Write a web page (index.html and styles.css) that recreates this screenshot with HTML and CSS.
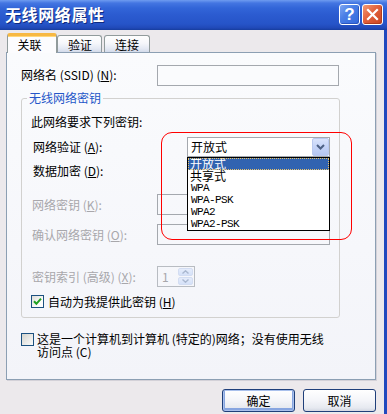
FILE: index.html
```html
<!DOCTYPE html>
<html lang="zh-CN">
<head>
<meta charset="utf-8">
<title>无线网络属性</title>
<link rel="stylesheet" href="styles.css">
</head>
<body>
<div class="window">
  <div class="titlebar">
    <span class="title">无线网络属性</span>
    <div class="caption-buttons">
      <span class="cap-btn help">?</span>
      <span class="cap-btn close"><svg width="13" height="13" viewBox="0 0 13 13"><path d="M2 2 L11 11 M11 2 L2 11" stroke="#fff" stroke-width="2.2" stroke-linecap="square"/></svg></span>
    </div>
  </div>
  <div class="client">
    <div class="tabs">
      <div class="tab active">关联</div>
      <div class="tab">验证</div>
      <div class="tab">连接</div>
    </div>
    <div class="panel">
      <div class="row ssid-row">
        <span class="lbl lbl-ssid">网络名 (SSID) (<u>N</u>):</span>
        <div class="textbox ssid"></div>
      </div>
      <fieldset class="group">
        <legend>无线网络密钥</legend>
        <div class="line r1">此网络要求下列密钥:</div>
        <div class="row r2">
          <span class="lbl lbl-combo">网络验证 (<u>A</u>):</span>
          <div class="combo">
            <span class="combo-text">开放式</span>
            <span class="drop-btn"><svg width="9" height="6" viewBox="0 0 9 6"><path d="M1 1 L4.5 4.5 L8 1" fill="none" stroke="#4d6185" stroke-width="2"/></svg></span>
            <ul class="listbox">
              <li class="sel">开放式</li>
              <li>共享式</li>
              <li class="latin">WPA</li>
              <li class="latin">WPA-PSK</li>
              <li class="latin">WPA2</li>
              <li class="latin">WPA2-PSK</li>
            </ul>
          </div>
        </div>
        <div class="row r3">
          <span class="lbl lbl-combo">数据加密 (<u>D</u>):</span>
          <div class="combo covered"></div>
        </div>
        <div class="row r4">
          <span class="lbl lbl-key disabled">网络密钥 (<u>K</u>):</span>
          <div class="textbox key"></div>
        </div>
        <div class="row r5">
          <span class="lbl lbl-key disabled">确认网络密钥 (<u>O</u>):</span>
          <div class="textbox key"></div>
        </div>
        <div class="row r6">
          <span class="lbl lbl-key disabled">密钥索引 (高级) (<u>X</u>):</span>
          <div class="spinner">
            <span class="spin-val">1</span>
            <span class="spin-btns">
              <span class="spin-b"><svg width="7" height="4" viewBox="0 0 7 4"><path d="M0.5 3.5 L3.5 0.8 L6.5 3.5" fill="none" stroke="#a9b7cf" stroke-width="1.4"/></svg></span>
              <span class="spin-b"><svg width="7" height="4" viewBox="0 0 7 4"><path d="M0.5 0.5 L3.5 3.2 L6.5 0.5" fill="none" stroke="#a9b7cf" stroke-width="1.4"/></svg></span>
            </span>
          </div>
        </div>
        <div class="row r7">
          <span class="check checked"><svg width="9" height="9" viewBox="0 0 9 9"><path d="M1 4.2 L3.4 6.8 L8 1.6" fill="none" stroke="#21a121" stroke-width="2"/></svg></span>
          <span class="check-lbl">自动为我提供此密钥 (<u>H</u>)</span>
        </div>
      </fieldset>
      <div class="adhoc">
        <span class="check unchecked"></span>
        <span class="adhoc-lbl">这是一个计算机到计算机 (特定的)网络；没有使用无线<br>访问点 (C)</span>
      </div>
    </div>
    <div class="buttons">
      <button class="btn default">确定</button>
      <button class="btn">取消</button>
    </div>
  </div>
  <div class="annotation"></div>
</div>
</body>
</html>
```
FILE: styles.css
```css
* { box-sizing: border-box; }
html, body { margin: 0; padding: 0; }
body {
  width: 387px;
  height: 414px;
  overflow: hidden;
  font-family: "Noto Sans CJK SC", "Noto Sans", sans-serif;
  font-size: 12px;
  line-height: 12px;
  color: #000;
  background: #ece9ec;
}
u { text-decoration: underline; text-underline-offset: 1px; }

.window {
  position: relative;
  width: 387px;
  height: 414px;
}

/* title bar */
.titlebar {
  height: 30px;
  display: flex;
  align-items: center;
  justify-content: space-between;
  padding: 0 4px 0 5px;
  background: linear-gradient(to bottom, #6f9cf0 0px, #4476e2 3px, #3265d8 8px, #2b5bd0 50%, #2654c8 80%, #2049b8 93%, #173d9e 100%);
}
.title {
  color: #fff;
  font-weight: bold;
  font-size: 16px;
  line-height: 16px;
  letter-spacing: 0.6px;
  text-shadow: 1px 1px 0 #0f2a80;
  margin-top: -2px;
}
.caption-buttons {
  display: flex;
  gap: 2px;
  margin-top: -1px;
}
.cap-btn {
  width: 21px;
  height: 21px;
  border: 1px solid #fff;
  border-radius: 3px;
  display: flex;
  align-items: center;
  justify-content: center;
  color: #fff;
  font-family: "Liberation Sans", sans-serif;
  font-weight: bold;
  font-size: 17px;
  line-height: 17px;
}
.help {
  background: linear-gradient(135deg, #7ea6f2 0%, #4a7fe6 40%, #3167dc 100%);
  box-shadow: inset -1px -1px 0 #2a55c0;
}
.close {
  background: linear-gradient(135deg, #f29a76 0%, #e2613c 45%, #c8441f 100%);
  box-shadow: inset -1px -1px 0 #b03c1e;
}

/* client */
.client {
  width: 387px;
  height: 384px;
  padding: 3px 8px 0 6px;
  border-right: 3px solid #2149be;
  background: #ece9ec;
}

.tabs {
  display: flex;
  align-items: flex-end;
  height: 19px;
  padding-left: 1px;
  position: relative;
  z-index: 2;
}
.tab {
  height: 17px;
  border: 1px solid #919b9c;
  border-bottom: none;
  border-radius: 3px 3px 0 0;
  background: linear-gradient(to bottom, #fefefe 0%, #f6f7fb 45%, #e3e8f3 80%, #d3dbea 100%);
  padding: 3px 0 0 0;
  text-align: center;
}
.tab:nth-child(2) { width: 45px; padding-left: 1px; }
.tab:nth-child(3) { width: 46px; margin-left: 2px; }
.tab.active {
  width: 50px;
  height: 20px;
  margin-bottom: -1px;
  border-top: 3px solid #f7b843;
  background: #fcfcfe;
  padding: 3px 5px 0 0;
  box-shadow: inset 0 1px 0 #ffd77a;
}

.panel {
  height: 328px;
  border: 1px solid #8c9fb3;
  box-shadow: 1px 1px 0 #d3d1d8;
  background: linear-gradient(to bottom, #fafbfd 0%, #f6f7fb 60%, #f3f4f9 100%);
  padding: 12px 0 0 14px;
  position: relative;
  z-index: 1;
}

.row {
  display: flex;
  align-items: center;
}
.lbl { flex: none; }
.lbl-ssid { width: 136px; margin-top: -2px; }
.lbl-combo { width: 156px; padding-left: 2px; }
.lbl-key { width: 126px; padding-left: 1px; }
.disabled { color: #a8a7ab; }

.textbox {
  height: 21px;
  border: 1px solid #a4a8ae;
  background: #fafbfd;
}
.ssid { width: 182px; }
.key { width: 173px; background: transparent; }

.group {
  width: 319px;
  margin: 6px 0 0 0;
  padding: 0 0 9px 9px;
  border: 1px solid #d2d1cf;
  border-radius: 3px;
  min-width: 0;
}
.group legend {
  color: #2456c8;
  padding: 0 2px;
  margin-left: -4px;
  line-height: 12px;
}
.r1 { margin-top: 12px; }
.r2 { margin-top: 9px; height: 20px; }
.r3 { margin-top: 4px; height: 20px; }
.r4 { margin-top: 13px; height: 21px; }
.r5 { margin-top: 9px; height: 21px; }
.r6 { margin-top: 21px; height: 21px; }
.r7 { margin-top: 8px; height: 13px; }

.combo {
  position: relative;
  width: 143px;
  height: 20px;
  border: 1px solid #a4a8ae;
  background: #fff;
  display: flex;
  align-items: center;
  padding-left: 3px;
}
.combo.covered { background: transparent; }
.combo-text { flex: 1; margin-top: -1px; }
.drop-btn {
  width: 17px;
  height: 18px;
  margin-right: 0;
  border: 1px solid #b9c9ef;
  border-radius: 2px;
  background: linear-gradient(to bottom, #d9e3fb 0%, #c4d3f7 50%, #b5c6f1 100%);
  display: flex;
  align-items: center;
  justify-content: center;
}
.listbox {
  position: absolute;
  left: -1px;
  top: 19px;
  width: 143px;
  height: 74px;
  margin: 0;
  padding: 0;
  list-style: none;
  border: 1px solid #000;
  background: #fff;
  z-index: 5;
}
.listbox li {
  height: 12px;
  line-height: 12px;
  padding-left: 2px;
  white-space: nowrap;
}
.listbox li.latin {
  font-family: "Liberation Mono", monospace;
  font-size: 11px;
  letter-spacing: -0.6px;
  padding-left: 3px;
}
.listbox li.sel {
  background: #3163b0;
  color: #fff;
  outline: 1px dotted #e8c36a;
  outline-offset: -1px;
}

.spinner {
  width: 38px;
  height: 21px;
  border: 1px solid #b8bcc2;
  display: flex;
  align-items: stretch;
  padding: 1px;
}
.spin-val { flex: 1; color: #a8a7ab; padding-left: 3px; display: flex; align-items: center; }
.spin-btns { width: 15px; display: flex; flex-direction: column; gap: 1px; }
.spin-b {
  flex: 1;
  background: linear-gradient(to bottom, #e5ecfb, #d5e1f8);
  border: 1px solid #d3ddf2;
  border-radius: 2px;
  display: flex;
  align-items: center;
  justify-content: center;
}

.check {
  width: 13px;
  height: 13px;
  border: 1px solid #1c5180;
  flex: none;
  display: flex;
  align-items: center;
  justify-content: center;
}
.checked { background: linear-gradient(135deg, #dcdcd7 0%, #fbfbf9 60%, #fff 100%); }
.unchecked { background: linear-gradient(135deg, #d4d4cd 0%, #ececea 60%, #fafafa 100%); }
.check-lbl { margin-left: 4px; }

.adhoc {
  margin-top: 15px;
  display: flex;
  align-items: flex-start;
}
.adhoc-lbl {
  margin-left: 3px;
  line-height: 13px;
  margin-top: -1px;
}

.buttons {
  display: flex;
  justify-content: flex-end;
  gap: 8px;
  margin-top: 9px;
}
.btn {
  width: 73px;
  height: 23px;
  border: 1px solid #1f3f7a;
  border-radius: 3px;
  background: linear-gradient(to bottom, #ffffff 0%, #f4f5f9 50%, #e6e9f0 85%, #d3d8e2 100%);
  font-family: "Noto Sans CJK SC", sans-serif;
  font-size: 12px;
  line-height: 12px;
  color: #000;
  padding: 0;
}
.btn.default {
  box-shadow: inset 0 0 0 1px #a9c0ec, inset 0 -1px 0 2px #87a5e0;
}

.annotation {
  position: absolute;
  left: 161px;
  top: 132px;
  width: 191px;
  height: 108px;
  border: 1px solid #f00;
  border-radius: 11px;
  z-index: 10;
  pointer-events: none;
}
```
